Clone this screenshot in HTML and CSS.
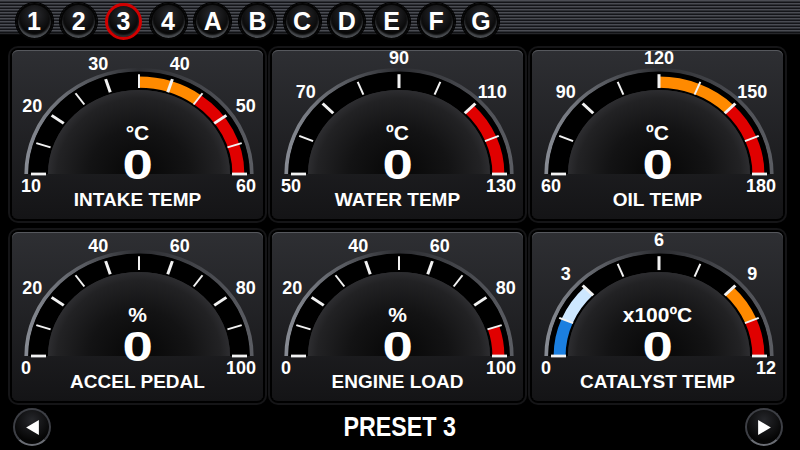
FILE: index.html
```html
<!DOCTYPE html>
<html>
  <head>
    <title>Gauges - preset 3</title>
    <link rel="stylesheet" href="styles.css">
  </head>

  <body>
    <header class="presets">
      <button class="preset">1</button>
      <button class="preset">2</button>
      <button class="preset is-active">3</button>
      <button class="preset">4</button>
      <button class="preset">A</button>
      <button class="preset">B</button>
      <button class="preset">C</button>
      <button class="preset">D</button>
      <button class="preset">E</button>
      <button class="preset">F</button>
      <button class="preset">G</button>
    </header>

    <main class="gauges">
      <div class="gauge" data-min="10" data-max="60" data-steps="5" data-bands="35,45,#ff8a00;45,60,#e00000">
        <svg class="dial"></svg>
        <span class="unit">°C</span>
        <span class="value">0</span>
        <span class="name">INTAKE TEMP</span>
      </div>
      <div class="gauge" data-min="50" data-max="130" data-steps="4" data-bands="110,130,#e00000">
        <svg class="dial"></svg>
        <span class="unit">ºC</span>
        <span class="value">0</span>
        <span class="name">WATER TEMP</span>
      </div>
      <div class="gauge" data-min="60" data-max="180" data-steps="4" data-bands="120,150,#ff8a00;150,180,#e00000">
        <svg class="dial"></svg>
        <span class="unit">ºC</span>
        <span class="value">0</span>
        <span class="name">OIL TEMP</span>
      </div>
      <div class="gauge" data-min="0" data-max="100" data-steps="5">
        <svg class="dial"></svg>
        <span class="unit">%</span>
        <span class="value">0</span>
        <span class="name">ACCEL PEDAL</span>
      </div>
      <div class="gauge" data-min="0" data-max="100" data-steps="5" data-bands="90,100,#e00000">
        <svg class="dial"></svg>
        <span class="unit">%</span>
        <span class="value">0</span>
        <span class="name">ENGINE LOAD</span>
      </div>
      <div class="gauge" data-min="0" data-max="12" data-steps="4" data-bands="0,1.5,#1b7fe0;1.5,3,#cde7ff;9,10.5,#ff8a00;10.5,12,#e00000">
        <svg class="dial"></svg>
        <span class="unit">x100ºC</span>
        <span class="value">0</span>
        <span class="name">CATALYST TEMP</span>
      </div>
    </main>

    <footer class="pager">
      <button class="arrow" aria-label="Previous">
        <svg width="14" height="16" viewBox="0 0 14 16"><polygon points="13,1 13,15 1,8" fill="#fff"/></svg>
      </button>
      <h1 class="pager__title"><span>PRESET 3</span></h1>
      <button class="arrow" aria-label="Next">
        <svg width="14" height="16" viewBox="0 0 14 16"><polygon points="1,1 1,15 13,8" fill="#fff"/></svg>
      </button>
    </footer>

    <script src="gauges.js"></script>
  </body>
</html>
```

FILE: styles.css
```css
* {
	margin: 0;
	padding: 0;
	box-sizing: border-box;
}

body {
	width: 800px;
	height: 450px;
	overflow: hidden;
	background: #000;
	color: #fff;
	font-family: "Liberation Sans", Arial, sans-serif;
}

/* preset strip */
.presets {
	display: flex;
	align-items: center;
	gap: 7.7px;
	height: 43px;
	padding-left: 15.5px;
	background:
		linear-gradient(rgba(0, 0, 0, 0) 32px, #000 35px),
		repeating-linear-gradient(#4a4c53 0 1px, #2e3035 1px 2px, #141519 2px 3px);
}

.preset {
	display: flex;
	justify-content: center;
	align-items: center;
	width: 37px;
	height: 37px;
	border: 2px solid #050505;
	border-radius: 50%;
	background: radial-gradient(circle at 50% 30%, #2a2b2f, #070707 65%);
	box-shadow: inset 0 -3px 2px rgba(130, 134, 142, 0.55), 0 0 0 1px #000;
	color: #fff;
	font: bold 25px/1 "Liberation Sans", Arial, sans-serif;
}

.preset.is-active {
	border: 3px solid #d10000;
	box-shadow: inset 0 -2px 2px rgba(130, 134, 142, 0.35);
}

/* gauge cards */
.gauges {
	display: grid;
	grid-template-columns: repeat(3, 251px);
	grid-auto-rows: 169px;
	gap: 13px 9px;
	padding: 7px 0 0 12px;
}

.gauge {
	position: relative;
	display: flex;
	flex-direction: column;
	align-items: center;
	padding-top: 72px;
	border-radius: 6px;
	background: linear-gradient(#2e2f33, #141416);
	box-shadow:
		inset 0 1px 0 #56585d,
		0 0 0 2px #000,
		0 0 0 4px #151517;
}

.dial {
	position: absolute;
	top: 0;
	left: 0;
	width: 100%;
	height: 100%;
	overflow: visible;
}

.dial .scale {
	font: bold 18px "Liberation Sans", Arial, sans-serif;
	fill: #fff;
}

.unit,
.value,
.name {
	position: relative;
	font-weight: bold;
}

.unit {
	font-size: 21px;
	line-height: 21px;
}

.value {
	margin-top: 1px;
	font-size: 42px;
	line-height: 42px;
	transform: scaleX(1.3);
}

.name {
	margin-top: 4px;
	font-size: 19px;
	line-height: 19px;
}

/* bottom pager */
.pager {
	display: grid;
	grid-template-columns: 38px 1fr 38px;
	align-items: center;
	padding: 7px 17px 0 13px;
}

.arrow {
	display: flex;
	justify-content: center;
	align-items: center;
	width: 38px;
	height: 38px;
	border: 2px solid #3d3f45;
	border-bottom-color: #6a6d74;
	border-radius: 50%;
	background: radial-gradient(circle at 50% 30%, #26272b, #050505 70%);
	box-shadow: 0 0 0 1px #000;
}

.arrow svg {
	width: 15px;
	height: 17px;
}

.pager__title {
	display: flex;
	justify-content: center;
	padding-left: 3px;
	font: bold 28px/1 "Liberation Sans", Arial, sans-serif;
}

.pager__title span {
	transform: scaleX(0.83);
}
```

FILE: gauges.js
```js
const NS = 'http://www.w3.org/2000/svg';
const CX = 127;
const CY = 124;
const SQUASH = 0.924;

function add(parent, tag, attrs) {
	const node = document.createElementNS(NS, tag);
	for (const k in attrs) node.setAttribute(k, attrs[k]);
	parent.appendChild(node);
	return node;
}

function polar(r, deg) {
	const t = deg * Math.PI / 180;
	return [r * Math.cos(t), r * Math.sin(t)];
}

function arc(r, from, to) {
	const [x1, y1] = polar(r, from);
	const [x2, y2] = polar(r, to);
	return `M${x1.toFixed(2)} ${y1.toFixed(2)}A${r} ${r} 0 0 1 ${x2.toFixed(2)} ${y2.toFixed(2)}`;
}

document.querySelectorAll('.gauge').forEach((card, n) => {
	const svg = card.querySelector('.dial');
	const min = +card.dataset.min;
	const max = +card.dataset.max;
	const steps = +card.dataset.steps;
	const angle = v => 180 + 180 * (v - min) / (max - min);

	// gradients
	const defs = add(svg, 'defs', {});
	const dome = add(defs, 'radialGradient', { id: 'dome' + n, gradientUnits: 'userSpaceOnUse', cx: 0, cy: 0, r: 91 });
	add(dome, 'stop', { offset: '0', 'stop-color': '#060606' });
	add(dome, 'stop', { offset: '0.55', 'stop-color': '#131314' });
	add(dome, 'stop', { offset: '0.9', 'stop-color': '#222224' });
	add(dome, 'stop', { offset: '1', 'stop-color': '#2d2d30' });
	const rim = add(defs, 'linearGradient', { id: 'rim' + n });
	add(rim, 'stop', { offset: '0', 'stop-color': '#878b93' });
	add(rim, 'stop', { offset: '0.5', 'stop-color': '#2c2d31' });
	add(rim, 'stop', { offset: '1', 'stop-color': '#5a5c62' });

	const face = add(svg, 'g', { transform: `translate(${CX} ${CY}) scale(1 ${SQUASH})` });
	add(face, 'path', { d: arc(112.6, 180, 360), fill: 'none', stroke: `url(#rim${n})`, 'stroke-width': 4 });
	add(face, 'path', { d: arc(100.9, 180, 360), fill: 'none', stroke: '#000', 'stroke-width': 19.8 });
	add(face, 'path', { d: arc(91, 180, 360) + 'Z', fill: `url(#dome${n})` });

	(card.dataset.bands || '').split(';').filter(Boolean).forEach(band => {
		const [from, to, color] = band.split(',');
		add(face, 'path', { d: arc(99.4, angle(+from), angle(+to)), fill: 'none', stroke: color, 'stroke-width': 12 });
	});

	const ticks = steps * 2;
	for (let i = 0; i <= ticks; i++) {
		const a = 180 + 180 * i / ticks;
		const [x1, y1] = polar(93, a);
		const [x2, y2] = polar(108, a);
		add(face, 'line', { x1, y1, x2, y2, stroke: '#f2f2f2', 'stroke-width': i % 2 ? 2 : 3 });
	}

	for (let i = 0; i <= steps; i++) {
		const value = min + (max - min) * i / steps;
		let x, y, anchor = 'middle';
		if (i === 0) {
			x = 9; y = 142; anchor = 'start';
		} else if (i === steps) {
			x = 244; y = 142; anchor = 'end';
		} else {
			const [dx, dy] = polar(1, 180 + 180 * i / steps);
			x = CX + 132 * dx;
			y = CY + 116 * dy + 6;
		}
		const label = add(svg, 'text', { x: x.toFixed(1), y: y.toFixed(1), 'text-anchor': anchor, class: 'scale' });
		label.textContent = value;
	}
});
```
